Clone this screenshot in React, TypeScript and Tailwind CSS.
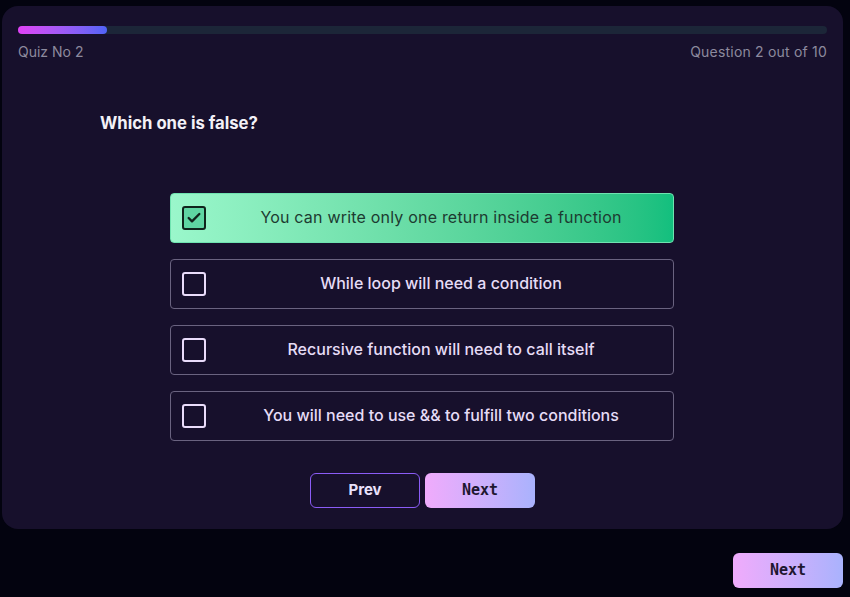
import { Check } from 'lucide-react';

const options = [
  'You can write only one return inside a function',
  'While loop will need a condition',
  'Recursive function will need to call itself',
  'You will need to use && to fulfill two conditions',
];

export default function App() {
  const selected = 0;

  return (
    <div className="min-h-[597px] bg-[#03030f] px-[2px] pt-[6px] pb-[9px] font-['Inter',sans-serif]">
      <div className="w-[841px] rounded-[16px] bg-[#17102c] px-4 pt-5 pb-[21px]">
        <div className="h-2 w-full rounded-full bg-[#1c2638]">
          <div className="h-2 w-[89px] rounded-full bg-gradient-to-r from-[#e040f5] to-[#4f63f7]" />
        </div>
        <div className="mt-2 flex justify-between text-sm text-[#8d8a9e]">
          <span>Quiz No 2</span>
          <span className="tracking-[0.2px]">Question 2 out of 10</span>
        </div>

        <h2 className="mt-[49px] pl-[82px] text-[16.7px] font-bold text-[#f3f1f7]">Which one is false?</h2>

        <div className="mt-[57px] ml-[152px] flex w-[504px] flex-col gap-4">
          {options.map((opt, i) => {
            const active = i === selected;
            return (
              <div
                key={opt}
                className={
                  active
                    ? 'flex h-[50px] items-center rounded-[4px] border border-[#6fe3b0] bg-gradient-to-r from-[#9af7cb] to-[#12bf7e] px-[11px]'
                    : 'flex h-[50px] items-center rounded-[4px] border border-[#6a6380] px-[11px]'
                }
              >
                {active ? (
                  <div className="flex h-6 w-6 items-center justify-center rounded-[3px] border-2 border-[#10241c] bg-[#5fd6a3]">
                    <Check size={16} strokeWidth={3.5} className="text-[#10241c]" />
                  </div>
                ) : (
                  <div className="h-6 w-6 rounded-[3px] border-2 border-[#eadcfb]" />
                )}
                <span
                  className={
                    active
                      ? 'flex-1 pl-[14px] pb-[2px] text-center text-[16px] tracking-[0.2px] text-[#1d3b31]'
                      : 'flex-1 pl-[14px] pb-[2px] text-center text-[16px] font-medium text-[#e6dcf6]'
                  }
                >
                  {opt}
                </span>
              </div>
            );
          })}
        </div>

        <div className="mt-8 flex justify-center gap-[5px]">
          <button className="h-[35px] w-[110px] rounded-[6px] border border-[#8b5cf6] text-[15px] font-bold text-[#e9e0fb]">
            Prev
          </button>
          <button className="h-[35px] w-[110px] rounded-[6px] bg-gradient-to-r from-[#f0abfc] to-[#a9b2fd] font-['DejaVu_Sans_Mono',monospace] text-[15px] font-bold text-[#1e1730]">
            Next
          </button>
        </div>
      </div>

      <div className="mt-[24px] flex w-[841px] justify-end">
        <button className="h-[35px] w-[110px] rounded-[6px] bg-gradient-to-r from-[#f0abfc] to-[#a9b2fd] font-['DejaVu_Sans_Mono',monospace] text-[15px] font-bold text-[#1e1730]">
          Next
        </button>
      </div>
    </div>
  );
}
